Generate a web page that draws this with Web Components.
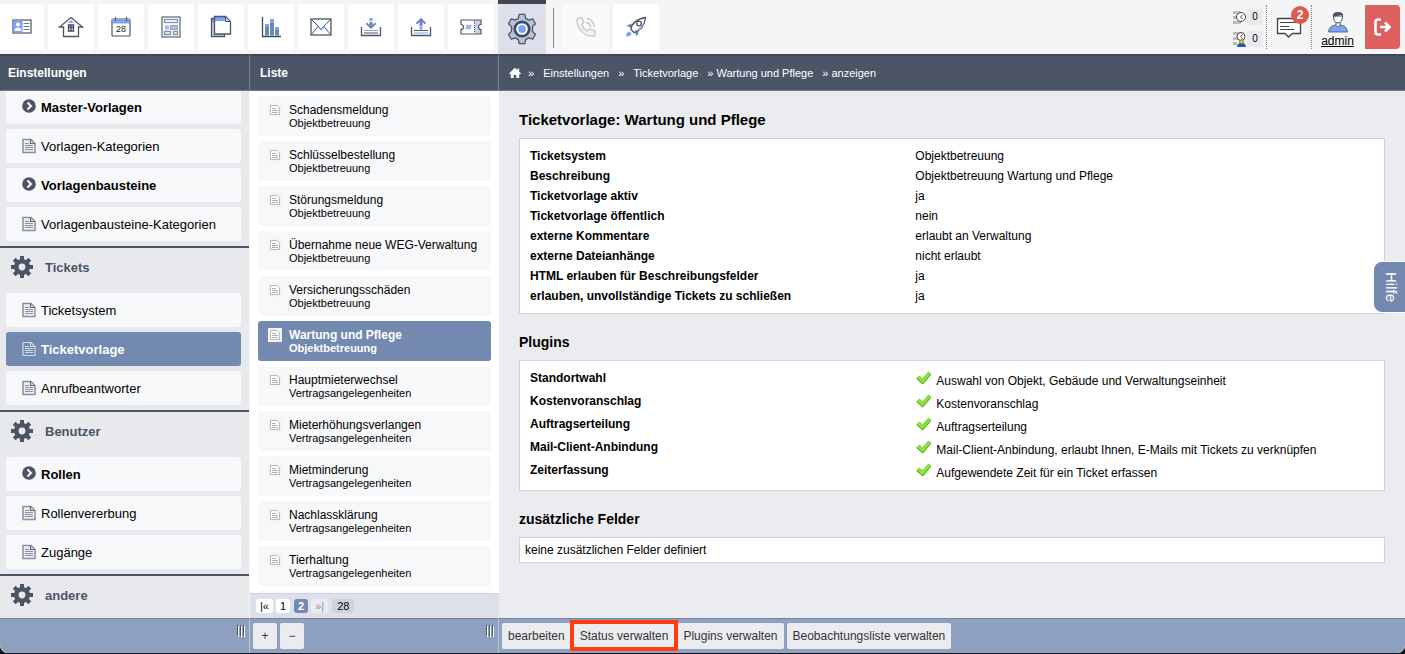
<!DOCTYPE html>
<html lang="de">
<head>
<meta charset="utf-8">
<meta name="viewport" content="width=device-width, initial-scale=1">
<title>Ticketvorlage: Wartung und Pflege</title>
<style>
  :root {
    --slate: #4b5566;
    --slate-dark: #3f4758;
    --blue: #7389b0;
    --blue-soft: #8fa1c1;
    --panel: #ebecf0;
    --row: #f7f8fa;
    --line: #cdd3dd;
  }
  html, body { margin: 0; height: 100%; }
  body { background: #10141c; color: #000; font-family: "Liberation Sans", Arial, Helvetica, sans-serif; font-size: 12px; overflow: hidden; }
</style>
</head>
<body>
<ticket-app></ticket-app>
<script>
const svg = (w, h, body, box) =>
  `<svg width="${w}" height="${h}" viewBox="${box || `0 0 ${w} ${h}`}" fill="none" aria-hidden="true">${body}</svg>`;

const gearTeeth = (cx, cy, r, w, h, n, fill) => Array.from({ length: n }, (_, i) =>
  `<rect x="${cx - w / 2}" y="${cy - r}" width="${w}" height="${h}" fill="${fill}" transform="rotate(${i * 360 / n} ${cx} ${cy})"/>`).join('');

const ICONS = {
  card: svg(20, 16, `<rect x="1" y="1" width="18" height="13" fill="#fff" stroke="#4b5566" stroke-width="1.2"/><path d="M1.500 1.500h9v12h-9z" fill="#7ba3f3"/><circle cx="6" cy="5.500" r="2" fill="#fff"/><path d="M2.500 12q0-3.500 3.500-3.500T9.500 12z" fill="#fff"/><path d="M11.500 4.500h6M11.500 7.500h6M11.500 10.500h6" stroke="#6b7890"/>`),
  house: svg(26, 22, `<path d="M5.500 20.500V11H1.500L13 1.500 24.500 11h-4v9.500z" fill="#fff" stroke="#4b5566" stroke-width="1.300"/><path d="M10.500 9h5v6h-5zM13 9v6M10.500 11.500h5" stroke="#3f4758" stroke-width="1.300"/><path d="M10 7 13 4l3 3z" fill="#7ba3f3"/>`),
  calendar: svg(20, 22, `<rect x="1" y="3" width="18" height="17" rx="1" fill="#fff" stroke="#4b5566" stroke-width="1.200"/><path d="M1.500 3.500h17v4h-17z" fill="#7ba3f3"/><path d="M1 3.500h18" stroke="#9aa5b8"/><path d="M4.500 1v4M15.500 1v4" stroke="#4b5566"/><text x="10" y="16" text-anchor="middle" font-size="9" fill="#222" font-family="Liberation Sans, sans-serif">28</text>`),
  news: svg(20, 22, `<rect x="1" y="1" width="18" height="20" fill="#fff" stroke="#5b6577" stroke-width="1.200"/><rect x="3.500" y="3.500" width="13" height="3" stroke="#8291ac" stroke-width="1.300"/><rect x="4" y="9.500" width="4" height="4" fill="#9dbaf5"/><path d="M9.500 9.500h7v4h-7z" fill="#b7c2d8" stroke="#8d9cba"/><path d="M3.500 15.500h6v3h-6zM12.500 15.500h4v3h-4z" stroke="#8291ac" stroke-width="1.300"/>`),
  copy: svg(22, 24, `<path d="M1.500 3.500h13v18h-13z" fill="#c5cfe0"/><path d="M1.500 3.500h4v4h-4z" fill="#7ba3f3"/><path d="M1.500 3.500h13v18h-13z" stroke="#4b5566" stroke-width="1.300"/><path d="M4.500 1.500h11l5 5v12.500h-16z" fill="#fff"/><path d="M5 2h10.500v4H5z" fill="#7ba3f3"/><path d="M4.500 1.500h11l5 5v12.500h-16z" stroke="#4b5566" stroke-width="1.300"/><path d="M15.500 1.500v5h5z" fill="#c5cfe0" stroke="#4b5566"/>`),
  chart: svg(20, 22, `<path d="M1.500 1v19.500H20" stroke="#3f4758" stroke-width="1.300"/><path d="M4 11h4v8.500H4zM9 7h4v12.500H9zM14 14h4v5.500h-4z" fill="#6f86b3"/><path d="M4 8h4v3H4zM9 3h4v4H9zM14 11h4v3h-4z" fill="#7ba3f3"/>`),
  mail: svg(22, 18, `<rect x="1" y="1" width="20" height="16" fill="#fff" stroke="#4b5566" stroke-width="1.300"/><path d="M1.500 1.500 11 11l9.500-9.500M1.500 16.500 8 8.500M20.500 16.500 14 8.500" stroke="#4b5566"/><path d="M7.500 8 11 11.500 14.500 8" stroke="#6a9bf5" stroke-width="1.500"/>`),
  down: svg(22, 20, `<path d="M1.500 10v8.500h19V10" stroke="#4b5566" stroke-width="1.300"/><path d="M4 13.500h14" stroke="#7ba3f3"/><path d="M4 16h14" stroke="#4b5566"/><path d="M9.500 5h3v3l2.500-2.500 1.200 1.500-5.200 5-5.200-5L7 5.500 9.500 8z" fill="#6f86b3"/><path d="M9.500 1h3v3h-3z" fill="#7ba3f3"/>`),
  up: svg(22, 20, `<path d="M1.500 10v8.500h19V10" stroke="#4b5566" stroke-width="1.300"/><path d="M4 13.500h14" stroke="#4b5566"/><path d="M4 16h14" stroke="#7ba3f3"/><path d="M9.500 9V5L7 7.500 5.800 6 11 .8 16.200 6 15 7.500 12.500 5v4z" fill="#6f86b3"/><path d="M9.500 9.500h3v3h-3z" fill="#7ba3f3"/>`),
  ticket: svg(22, 16, `<path d="M1 1h20v4.500a2.500 2.500 0 0 0 0 5V15H1v-4.500a2.500 2.500 0 0 0 0-5z" fill="#fff"/><path d="M14.500 1.500h6v4a2.500 2.500 0 0 0 0 5v4h-6z" fill="#c9d0df"/><path d="M1 1h20v4.500a2.500 2.500 0 0 0 0 5V15H1v-4.500a2.500 2.500 0 0 0 0-5z" stroke="#4b5566" stroke-width="1.200"/><path d="M14.500 2v12" stroke="#4b5566" stroke-dasharray="1 1"/><path d="M8 5.500 7 10.500M10.500 5.500l-1 5M6 7h5.500M5.500 9H11" stroke="#6a9bf5"/>`),
  cog: svg(32, 32, `<path d="M12.300 5.400 13.200 1.300h5.600l.9 4.100 3 1.700 4-1.300 2.800 4.900-3 2.900v4.800l3 2.900-2.800 4.900-4-1.300-3 1.700-.9 4.100h-5.600l-.9-4.100-3-1.700-4 1.300-2.800-4.900 3-2.900v-4.800l-3-2.900 2.800-4.900 4 1.300z" fill="#b7c2d8" stroke="#4b5566" stroke-width="1.300" stroke-linejoin="round"/><circle cx="16" cy="16" r="7.200" fill="#fff" stroke="#3f4a60" stroke-width="2.700"/><circle cx="16" cy="16" r="3.900" fill="#7ba3f3"/>`),
  phone: svg(22, 22, `<path d="M2 2.500 7 1.500l2 5-2.500 2q1.500 4 5.500 6.500l2.500-2 5.500 2v5q-9 1-14-5.500T2 2.500z" fill="#f3f3f3" stroke="#c4c4c4" stroke-width="1.200"/><path d="M11 6.500q4 .5 4.500 4.500M11.500 2.500q7 1 8 8.500" stroke="#cacaca" stroke-width="1.600"/>`),
  rocket: svg(22, 22, `<path d="M7 7.500 1.500 9.500 6 12zM14 15l-2 5.500L9.500 16z" fill="#6f86b3"/><path d="M6 13.500Q7 4 20.500 1.500 19 14 9 16.500z" fill="#fff" stroke="#4b5566" stroke-width="1.300"/><path d="M8.500 15.500Q17 12 19.500 3 18.500 14 9.500 16z" fill="#a9b6d0"/><circle cx="14" cy="7.500" r="2.300" fill="#fff" stroke="#4b5566" stroke-width="1.300"/><path d="M1 20.500q0-4.500 3.500-5l2 2q-.5 3-5.500 3z" fill="#7ba3f3"/>`),
  queue: svg(13, 15, `<path d="M0 1h7v3H0zM0 6h5v3H0zM0 11h8v3H0z" fill="#bdbdbd"/><circle cx="8" cy="7" r="4.500" fill="#fff" stroke="#444"/><path d="M9.500 5 7.500 7l2 2" stroke="#444"/>`),
  queueUser: svg(13, 15, `<path d="M0 0h7v3H0zM0 5h5v3H0zM0 10h4v3H0z" fill="#bdbdbd"/><circle cx="8" cy="4.500" r="4" fill="#fff" stroke="#444"/><path d="M9.500 2.500 7.500 4.500l2 2" stroke="#444"/><path d="M4 15q0-4 4.500-4t4.500 4z" fill="#1d5fb8"/><circle cx="8.500" cy="9.800" r="2" fill="#f3c25b" stroke="#6d4a14" stroke-width=".7"/>`),
  message: svg(26, 22, `<path d="M1.500 1.500h23v15h-8l-4 3.500-3.500-3.500H1.500z" fill="#fff" stroke="#444" stroke-width="1.300"/><path d="M4 5.500h18M4 9.500h9M4 12.500h14" stroke="#444" stroke-width="1.200"/>`),
  user: svg(20, 22, `<path d="M.5 21q.5-6 6.500-7h6q6 1 6.500 7z" fill="#7ba3f3" stroke="#4b5566" stroke-width=".8"/><path d="M8 11v3l2 2 2-2v-3z" fill="#fff" stroke="#4b5566" stroke-width=".8"/><path d="M5.500 5q0 7 4.500 7t4.500-7z" fill="#fff" stroke="#4b5566"/><path d="M5 6Q4 1 10 1t5 5q-1-2-2-2-4 1-8 2z" fill="#4b5566"/>`),
  logout: svg(18, 18, `<path d="M7 1.500H4q-2.500 0-2.500 2.500v10q0 2.500 2.500 2.500h3" stroke="#fff" stroke-width="2.600"/><path d="M6 9h9M11 4.500 15.500 9 11 13.500" stroke="#fff" stroke-width="2.600"/>`),
  home: svg(12, 12, `<path d="M0 6.500 6 .8l6 5.700-1 1-.8-.7V11H7.300V8H4.700v3H1.800V6.800l-.8.7zM8.500 1.500h1.700v3L8.500 3z" fill="#fff"/>`),
  page: svg(14, 16, `<path d="M1 1.500h8l4 4v9H1z" fill="#eceef2" stroke="#8a90a0" stroke-width="1.500"/><path d="M8.500 1.500v4h4" stroke="#5f6879" stroke-width="1.200"/><path d="M3 5.500h4M3 7.500h8M3 9.500h8M3 11.500h8" stroke="#8a90a0"/>`),
  pageActive: svg(14, 16, `<path d="M1 1.500h8l4 4v9H1z" stroke="#d2daea" stroke-width="1.200"/><path d="M8.500 1.500v4h4M3 5.500h4M3 7.500h8M3 9.500h8M3 11.500h8" stroke="#d2daea"/>`),
  chevron: svg(14, 14, `<circle cx="7" cy="7" r="6.800" fill="#4b5566"/><path d="M5.500 3.500 9 7l-3.500 3.500" stroke="#fff" stroke-width="2"/>`),
  gear: svg(24, 24, `${gearTeeth(12, 12, 11, 4, 5, 8, '#4b5566')}<circle cx="12" cy="12" r="5.700" stroke="#4b5566" stroke-width="4.600"/>`),
  doc: svg(14, 14, `<path d="M0 0h14v14H0z" fill="#f4f4f4"/><path d="M2.500 2.500h6.500l2.500 2.500v6.500h-9z" fill="#fff" stroke="#b8b8b8"/><path d="M4 5.500h4M4 7.500h6M4 9.500h6" stroke="#b0b0b0"/>`),
  check: svg(16, 14, `<path d="M1.500 7.500 4.500 5 7.500 8 13.500 1 16 3 7.800 13z" fill="#8fe23a" stroke="#6cc42a" stroke-width=".8"/><path d="M2 8 7.800 13 16 3.200" stroke="#4f9a18" stroke-width=".8"/>`),
  grip: svg(9, 12, `<path d="M.5 0v11M3.500 0v11M6.500 0v11" stroke="#4b5566"/><path d="M1.500 1v11M4.500 1v11M7.500 1v11" stroke="#fff"/>`)
};

function define(name, css, render) {
  customElements.define(name, class extends HTMLElement {
    constructor() { super(); this.attachShadow({ mode: 'open' }); }
    connectedCallback() {
      const tpl = document.createElement('template');
      tpl.innerHTML = `<style>*{box-sizing:border-box}svg{display:block;flex:none}${css}</style>${render(this)}`;
      this.shadowRoot.replaceChildren(tpl.content.cloneNode(true));
    }
  });
}

define('tool-tile', `
  :host { display: block; width: 46px; height: 46px; margin-top: 4px; }
  :host([edge]) { width: 44px; }
  :host([active]) { width: 48px; height: 54px; margin: 0; }
  a { display: flex; align-items: center; justify-content: center; height: 100%; background: #fff; }
  :host([disabled]) a { background: #fafafa; }
  :host([active]) a { background: #dde0ea; border-top: 4px solid var(--slate-dark); }
`, el => `<a href="#" aria-label="${el.getAttribute('label')}">${ICONS[el.getAttribute('icon')]}</a>`);

define('count-line', `
  :host { display: flex; gap: 1px; align-items: center; }
  span { width: 16px; height: 16px; background: #e9eaee; font-size: 10px; line-height: 16px; text-align: center; }
`, el => `${ICONS[el.getAttribute('icon')]}<span><slot></slot></span>`);

define('top-bar', `
  :host { display: flex; justify-content: space-between; height: 54px; background: #f5f5f5; }
  nav { display: flex; gap: 4px; }
  hr { width: 1px; height: 40px; margin: 8px 5px 0 3px; border: 0; background: #8b8b8b; }
  .right { display: flex; padding: 5px 5px 5px 0; }
  .counts { display: flex; flex-direction: column; gap: 6px; padding: 4px 3px 0 0; }
  .msg, .user { border-left: 1px dotted #888; }
  .msg { position: relative; width: 45px; padding: 12px 0 0 9px; }
  .badge { position: absolute; top: 1px; left: 24px; width: 18px; height: 18px; border-radius: 9px; background: #dd5c50; color: #fff; font-weight: bold; font-size: 12px; line-height: 18px; text-align: center; }
  .user { display: flex; flex-direction: column; align-items: center; width: 54px; padding: 6px 2px 0 0; color: #000; font-size: 12px; line-height: 16px; }
  .out { display: flex; align-items: center; justify-content: center; width: 35px; border: 0; border-left: 1px dotted #888; border-radius: 0 4px 4px 0; background: #dd5f5e; padding: 0; }
`, () => `
  <nav aria-label="Module">
    <tool-tile edge icon="card" label="Kontakte"></tool-tile>
    <tool-tile icon="house" label="Objekte"></tool-tile>
    <tool-tile icon="calendar" label="Kalender"></tool-tile>
    <tool-tile icon="news" label="Aushang"></tool-tile>
    <tool-tile icon="copy" label="Dokumente"></tool-tile>
    <tool-tile icon="chart" label="Statistik"></tool-tile>
    <tool-tile icon="mail" label="Post"></tool-tile>
    <tool-tile icon="down" label="Eingang"></tool-tile>
    <tool-tile icon="up" label="Ausgang"></tool-tile>
    <tool-tile icon="ticket" label="Tickets"></tool-tile>
    <tool-tile active icon="cog" label="Einstellungen"></tool-tile>
    <hr>
    <tool-tile disabled icon="phone" label="Telefon"></tool-tile>
    <tool-tile icon="rocket" label="Schnellstart"></tool-tile>
  </nav>
  <div class="right">
    <div class="counts"><count-line icon="queue">0</count-line><count-line icon="queueUser">0</count-line></div>
    <div class="msg">${ICONS.message}<span class="badge">2</span></div>
    <a class="user" href="#">${ICONS.user}<span>admin</span></a>
    <button class="out" aria-label="Abmelden">${ICONS.logout}</button>
  </div>`);

define('app-column', `
  :host { display: flex; flex-direction: column; min-width: 0; min-height: 0; background: var(--panel); }
  header { position: relative; z-index: 1; flex: none; display: flex; align-items: center; height: 36px; padding: 0 8px; background: var(--slate); border-top: 2px solid var(--slate-dark); border-right: 1px solid #7a8291; box-shadow: 0 1px #6f7899; color: #fff; font-weight: bold; }
  .body { flex: 1; min-height: 0; overflow: hidden; }
  footer { flex: none; display: flex; gap: 3px; height: 35px; padding: 4px 3px; background: var(--blue-soft); border-top: 1px solid #7b818d; border-right: 1px solid #b9c4da; }
  .grip { margin: 2px 0 0 auto; }
  :host([wide]) header, :host([wide]) footer { border-right: 0; }
`, el => `
  <header><slot name="title"></slot></header>
  <div class="body"><slot></slot></div>
  <slot name="pager"></slot>
  <footer><slot name="actions"></slot>${el.hasAttribute('wide') ? '' : `<div class="grip">${ICONS.grip}</div>`}</footer>`);

define('nav-item', `
  :host { display: block; }
  a { display: flex; align-items: center; gap: 5px; height: 34px; padding: 0 16px; border-radius: 3px; background: var(--row); color: #000; font-size: 13px; text-decoration: none; }
  i { display: flex; justify-content: center; width: 14px; }
  :host([group]) i { padding-bottom: 2px; }
  :host([group]) a { font-weight: bold; }
  :host([active]) a { background: var(--blue); color: #fff; font-weight: bold; }
`, el => `<a href="#"><i>${el.hasAttribute('group') ? ICONS.chevron : el.hasAttribute('active') ? ICONS.pageActive : ICONS.page}</i><slot></slot></a>`);

define('nav-section', `
  :host { display: block; padding-bottom: 5px; }
  h2 { display: flex; align-items: center; gap: 11px; height: 47px; margin: 0; padding: 0 10px 7px; border-top: 2px solid var(--slate); color: var(--slate); font-size: 13px; }
  div { display: grid; gap: 5px; padding: 0 8px 0 6px; }
`, el => `${el.hasAttribute('label') ? `<h2>${ICONS.gear}${el.getAttribute('label')}</h2>` : ''}<div><slot></slot></div>`);

define('side-nav', `
  :host { display: block; height: 100%; background: #e8e9ec; border-right: 1px solid #f5f5f7; }
`, () => `
  <nav aria-label="Einstellungen">
    <nav-section>
      <nav-item group>Master-Vorlagen</nav-item>
      <nav-item>Vorlagen-Kategorien</nav-item>
      <nav-item group>Vorlagenbausteine</nav-item>
      <nav-item>Vorlagenbausteine-Kategorien</nav-item>
    </nav-section>
    <nav-section label="Tickets">
      <nav-item>Ticketsystem</nav-item>
      <nav-item active>Ticketvorlage</nav-item>
      <nav-item>Anrufbeantworter</nav-item>
    </nav-section>
    <nav-section label="Benutzer">
      <nav-item group>Rollen</nav-item>
      <nav-item>Rollenvererbung</nav-item>
      <nav-item>Zugänge</nav-item>
    </nav-section>
    <nav-section label="andere"></nav-section>
  </nav>`);

define('list-entry', `
  :host { display: block; }
  a { display: flex; gap: 7px; height: 40px; padding: 7px 10px; border-radius: 3px; background: var(--row); color: #000; text-decoration: none; }
  b, small { display: block; font-weight: normal; line-height: 14px; white-space: nowrap; }
  b { font-size: 12px; }
  small { font-size: 11px; line-height: 13px; }
  :host([active]) a { background: var(--blue); color: #fff; }
  :host([active]) b, :host([active]) small { font-weight: bold; }
`, el => `<a href="#">${ICONS.doc}<span><b><slot></slot></b><small>${el.getAttribute('system')}</small></span></a>`);

define('template-list', `
  :host { display: grid; gap: 5px; align-content: start; height: 100%; padding: 6px 8px 0; background: #fff; }
  .next { height: 40px; border-radius: 3px; background: var(--row); }
`, () => {
  const row = (t, s, a) => `<list-entry system="${s}"${a ? ' active' : ''}>${t}</list-entry>`;
  const O = 'Objektbetreuung', V = 'Vertragsangelegenheiten';
  return [
    row('Schadensmeldung', O), row('Schlüsselbestellung', O), row('Störungsmeldung', O),
    row('Übernahme neue WEG-Verwaltung', O), row('Versicherungsschäden', O), row('Wartung und Pflege', O, true),
    row('Hauptmieterwechsel', V), row('Mieterhöhungsverlangen', V), row('Mietminderung', V),
    row('Nachlassklärung', V), row('Tierhaltung', V)
  ].join('') + '<div class="next"></div>';
});

define('list-pager', `
  :host { display: flex; align-items: center; gap: 3px; height: 25px; padding: 0 6px; background: #dde0ea; border-top: 1px solid #cad3e2; border-right: 1px solid #dde0ea; font-size: 11px; }
  button, output { height: 14px; min-width: 14px; padding: 0 4px; border: 0; border-radius: 3px; background: #fff; color: #000; font: inherit; line-height: 14px; }
  [aria-current] { margin-left: 1px; background: var(--blue); color: #fff; font-weight: bold; }
  [disabled] { background: #ebecf2; color: #8a8f9a; }
  output { margin-left: 1px; padding: 0 5px; background: #ccd2df; }
`, () => `<button aria-label="Anfang">|«</button><button>1</button><button aria-current="page">2</button><button disabled>»|</button><output>28</output>`);

define('action-button', `
  :host { display: block; }
  button { position: relative; height: 26px; min-width: 24px; padding: 0 6px; border: 0; border-radius: 2px; background: #ebecf0; color: #333; font: inherit; font-size: 12px; white-space: nowrap; }
  :host([marked]) button::after { content: ""; position: absolute; z-index: 1; inset: -3px -4px -2px; border: 4px solid #ff3d12; }
`, () => `<button><slot></slot></button>`);

define('bread-crumbs', `
  :host { display: block; }
  ol { display: flex; align-items: center; gap: 9px; margin: 0; padding: 0 0 0 2px; list-style: none; font-size: 11px; font-weight: normal; }
  li { display: flex; gap: 3px; white-space: nowrap; }
  li:first-child { margin-right: -2px; }
  .root { gap: 9px; }
  a { color: #fff; text-decoration: none; }
`, () => `<ol>
  <li><a href="#" aria-label="Start">${ICONS.home}</a></li>
  <li class="root"><span>»</span><a href="#">Einstellungen</a></li>
  <li class="root"><span>»</span><a href="#">Ticketvorlage</a></li>
  <li><span>»</span><a href="#">Wartung und Pflege</a></li>
  <li><span>»</span><a href="#">anzeigen</a></li>
</ol>`);

define('detail-card', `
  :host { display: block; margin-bottom: 18px; }
  h2 { margin: 0 0 8px; font-size: 14px; line-height: 20px; }
  :host([lead]) h2 { font-size: 15px; }
  .card { padding: 7px 5px; background: #fff; border: 1px solid var(--line); }
  :host([plain]) .card { padding: 2px 5px; line-height: 20px; }
`, el => `<h2>${el.getAttribute('label')}</h2><div class="card"><slot></slot></div>`);

const TABLE = `
  table { width: 100%; border-collapse: collapse; table-layout: fixed; }
  th { width: 45%; text-align: left; }
  th, td { padding: 0 5px; line-height: 20px; vertical-align: top; font-size: 12px; }
  td { padding-left: 6px; }`;

define('property-table', `:host { display: block; } ${TABLE}`, () => `<table>${[
  ['Ticketsystem', 'Objektbetreuung'],
  ['Beschreibung', 'Objektbetreuung Wartung und Pflege'],
  ['Ticketvorlage aktiv', 'ja'],
  ['Ticketvorlage öffentlich', 'nein'],
  ['externe Kommentare', 'erlaubt an Verwaltung'],
  ['externe Dateianhänge', 'nicht erlaubt'],
  ['HTML erlauben für Beschreibungsfelder', 'ja'],
  ['erlauben, unvollständige Tickets zu schließen', 'ja']
].map(([k, v]) => `<tr><th scope="row">${k}</th><td>${v}</td></tr>`).join('')}</table>`);

define('plugin-table', `:host { display: block; } ${TABLE}
  tr { height: 23px; }
  div { display: flex; gap: 5px; }
  svg { margin-top: 3px; }
  span { padding-top: 3px; }
`, () => `<table>${[
  ['Standortwahl', 'Auswahl von Objekt, Gebäude und Verwaltungseinheit'],
  ['Kostenvoranschlag', 'Kostenvoranschlag'],
  ['Auftragserteilung', 'Auftragserteilung'],
  ['Mail-Client-Anbindung', 'Mail-Client-Anbindung, erlaubt Ihnen, E-Mails mit Tickets zu verknüpfen'],
  ['Zeiterfassung', 'Aufgewendete Zeit für ein Ticket erfassen']
].map(([k, v]) => `<tr><th scope="row">${k}</th><td><div>${ICONS.check}<span>${v}</span></div></td></tr>`).join('')}</table>`);

define('help-tab', `
  :host { position: fixed; z-index: 2; top: 261px; right: 0; }
  button { width: 32px; height: 52px; padding: 0 0 0 4px; border: 1px solid #fff; border-right: 0; border-radius: 9px 0 0 9px; background: var(--blue); color: #fff; font: inherit; font-size: 15px; writing-mode: vertical-rl; }
`, () => `<button>Hilfe</button>`);

define('ticket-app', `
  :host { display: flex; flex-direction: column; height: calc(100vh - 1px); border-radius: 0 0 8px 8px; overflow: hidden; background: #f5f5f5; }
  main { flex: 1; min-height: 0; display: grid; grid-template: minmax(0, 1fr) / 250px 249px minmax(0, 1fr); }
  .details { padding: 20px 20px 0; }
  .list { padding-left: 2px; }
`, () => `
  <top-bar></top-bar>
  <main>
    <app-column>
      <span slot="title">Einstellungen</span>
      <side-nav></side-nav>
    </app-column>
    <app-column>
      <span slot="title" class="list">Liste</span>
      <template-list></template-list>
      <list-pager slot="pager"></list-pager>
      <action-button slot="actions">+</action-button>
      <action-button slot="actions">−</action-button>
    </app-column>
    <app-column wide>
      <bread-crumbs slot="title"></bread-crumbs>
      <div class="details">
        <detail-card lead label="Ticketvorlage: Wartung und Pflege"><property-table></property-table></detail-card>
        <detail-card label="Plugins"><plugin-table></plugin-table></detail-card>
        <detail-card plain label="zusätzliche Felder">keine zusätzlichen Felder definiert</detail-card>
      </div>
      <action-button slot="actions">bearbeiten</action-button>
      <action-button slot="actions" marked>Status verwalten</action-button>
      <action-button slot="actions">Plugins verwalten</action-button>
      <action-button slot="actions">Beobachtungsliste verwalten</action-button>
    </app-column>
  </main>
  <help-tab></help-tab>`);
</script>
</body>
</html>
